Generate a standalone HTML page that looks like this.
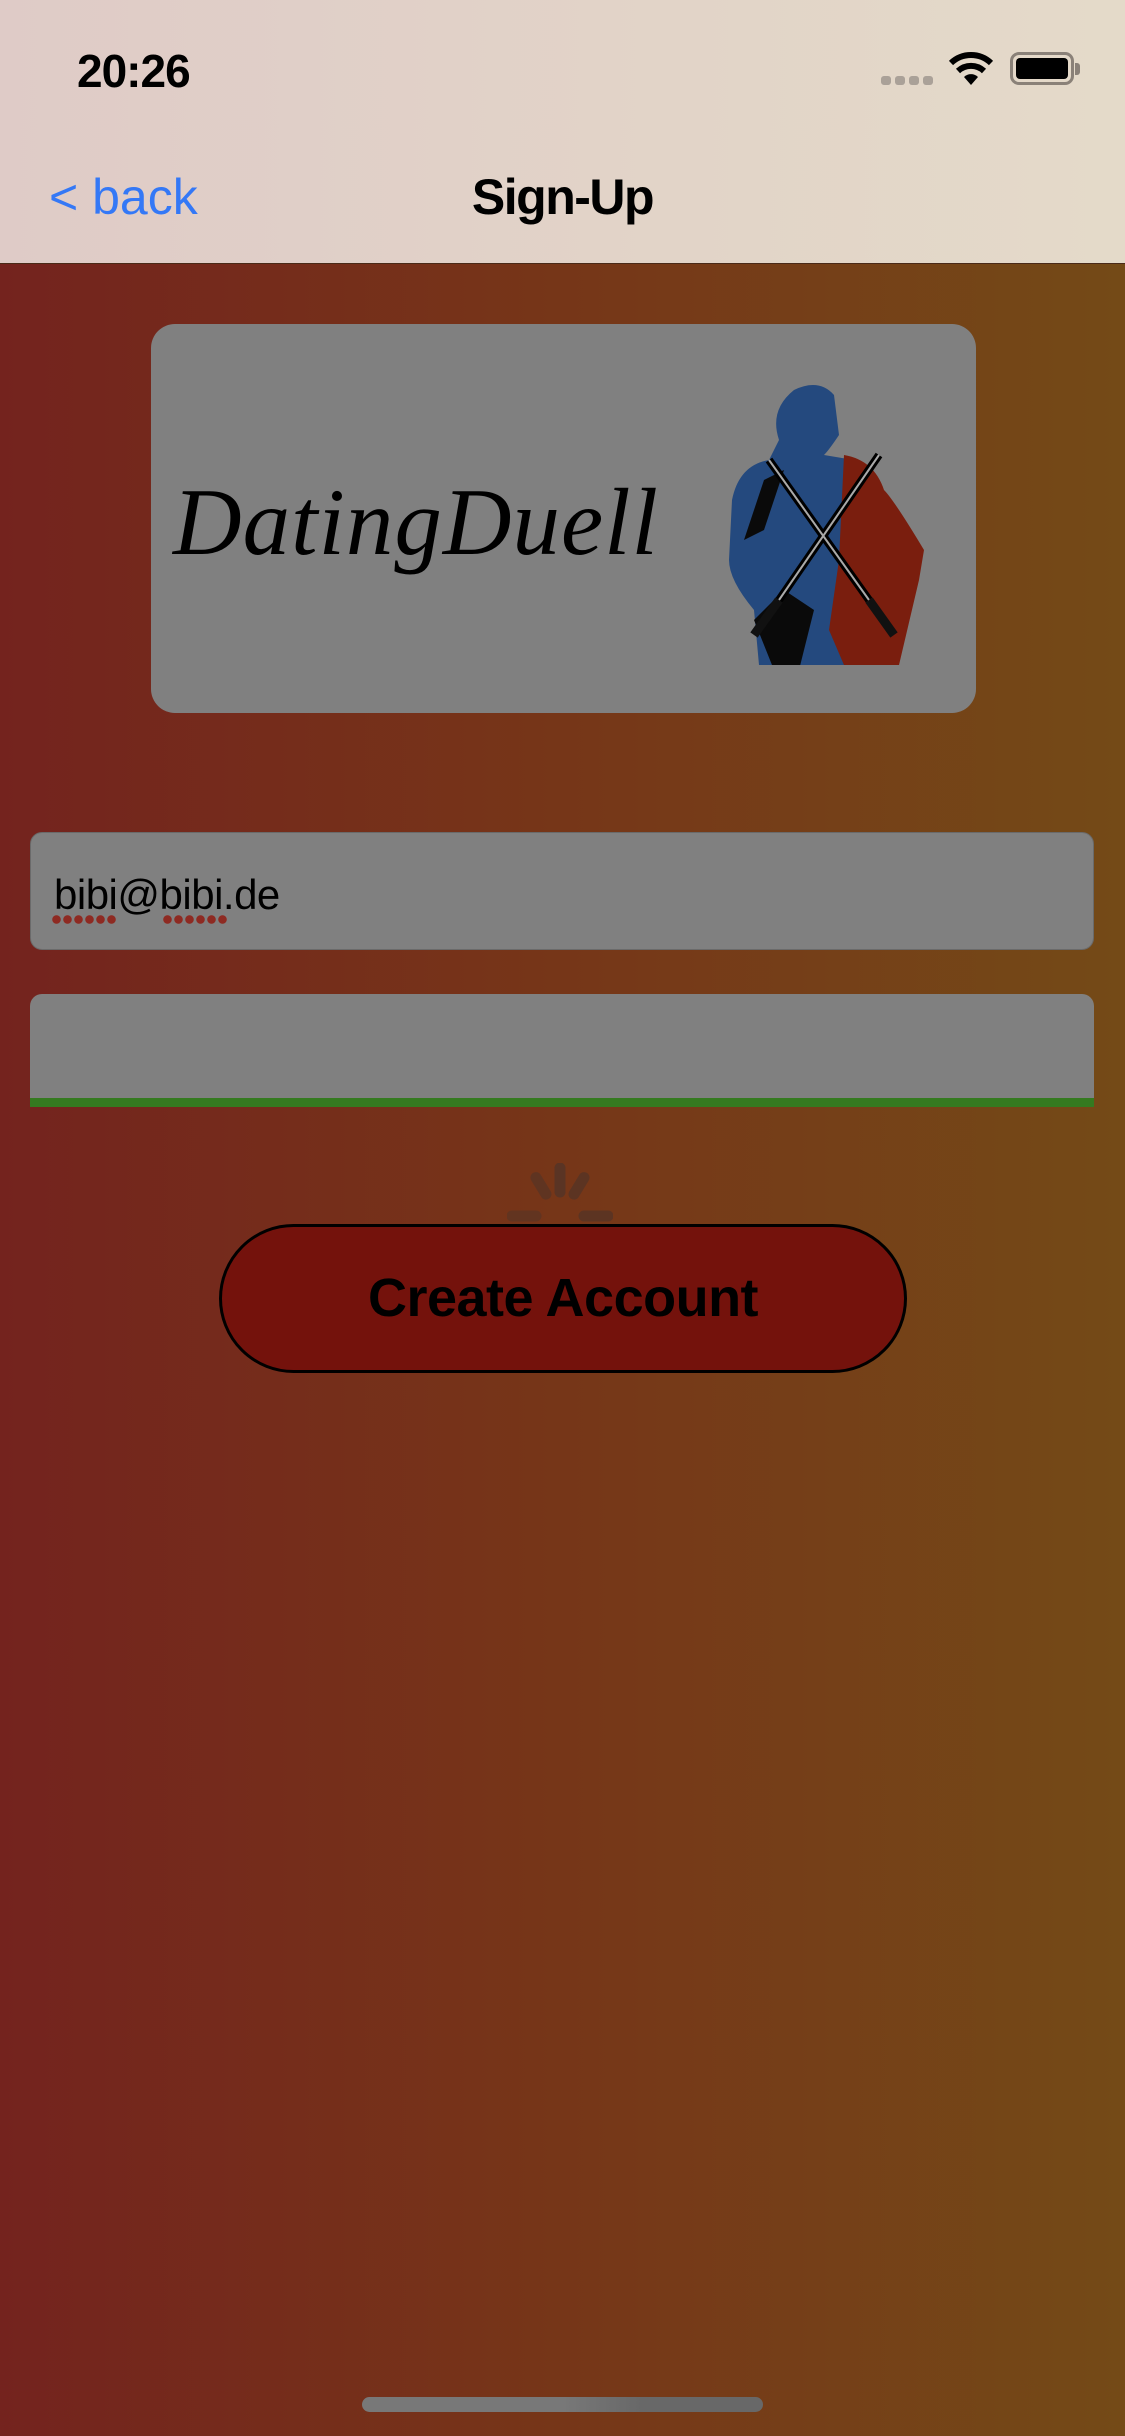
<!DOCTYPE html>
<html><head><meta charset="utf-8"><style>
*{margin:0;padding:0;box-sizing:border-box}
body{width:1125px;height:2436px;position:relative;overflow:hidden;font-family:"Liberation Sans",sans-serif;background:linear-gradient(90deg,#74231e 0%,#763618 50%,#744a17 100%)}
.nav{position:absolute;left:0;top:0;width:1125px;height:264px;background:linear-gradient(90deg,#dfcbc7,#e4dac9);border-bottom:1px solid #4a2a18}
.abs{position:absolute}
.dots{position:absolute;height:9px;background:radial-gradient(circle,#8e2a22 4px,transparent 4.5px) 0 0/11px 9px}
</style></head><body>
<div class="nav">
<div class="abs" style="left:77px;top:44px;font-size:46px;font-weight:bold;letter-spacing:-1px">20:26</div>
<div class="abs" style="left:881px;top:76px;width:52px;height:9px">
 <span class="abs" style="left:0;width:10px;height:9px;border-radius:3px;background:#aaa198"></span>
 <span class="abs" style="left:14px;width:10px;height:9px;border-radius:3px;background:#aaa198"></span>
 <span class="abs" style="left:28px;width:10px;height:9px;border-radius:3px;background:#aaa198"></span>
 <span class="abs" style="left:42px;width:10px;height:9px;border-radius:3px;background:#aaa198"></span>
</div>
<svg class="abs" style="left:948px;top:50px" width="46" height="36" viewBox="0 0 46 36"><path d="M23 35 L16 27 A10 10 0 0 1 30 27 Z" fill="#000"/><path d="M10 21 A19 19 0 0 1 36 21" stroke="#000" stroke-width="6" fill="none"/><path d="M3 13 A29 29 0 0 1 43 13" stroke="#000" stroke-width="6" fill="none"/></svg>
<div class="abs" style="left:1010px;top:52px;width:64px;height:33px;border:3px solid #8a8178;border-radius:9px;padding:3px"><div style="width:100%;height:100%;background:#000;border-radius:4px"></div></div>
<div class="abs" style="left:1075px;top:63px;width:5px;height:12px;background:#8a8178;border-radius:0 3px 3px 0"></div>
<div class="abs" style="left:49px;top:168px;font-size:50px;color:#3478f6">&lt; back</div>
<div class="abs" style="left:0;width:1125px;text-align:center;top:168px;font-size:50px;font-weight:bold;letter-spacing:-1.5px">Sign-Up</div>
</div>

<div class="abs" style="left:151px;top:324px;width:825px;height:389px;background:#808080;border-radius:24px">
 <div class="abs" style="left:22px;top:143px;font-family:'Liberation Serif',serif;font-style:italic;font-size:95px;color:#000;letter-spacing:1px">DatingDuell</div>
 <svg class="abs" style="left:573px;top:56px" width="205" height="285" viewBox="0 0 205 285">
  <path d="M70 10 Q95 -2 110 15 L115 55 Q105 70 100 75 L130 80 L140 120 L120 285 L35 285 L30 230 Q5 200 5 180 L8 120 Q15 85 45 80 L55 60 Q45 30 70 10Z" fill="#24497e"/>
  <path d="M120 75 Q150 80 160 110 Q170 120 200 170 L195 200 L175 285 L120 285 L105 250 L115 180 Z" fill="#7a1e0e"/>
  <path d="M50 290 L30 240 L60 210 L90 230 L75 290Z M60 90 L40 100 L20 160 L40 150Z" fill="#0a0a0a"/>
  <g stroke="#000" stroke-width="8" fill="none"><path d="M45 80 L145 220"/><path d="M155 75 L55 220"/></g>
  <g stroke="#aaa" stroke-width="2" fill="none"><path d="M45 80 L145 220"/><path d="M155 75 L55 220"/></g>
  <g stroke="#111" stroke-width="9"><path d="M145 220 L170 255"/><path d="M55 220 L30 255"/></g>
 </svg>
</div>

<div class="abs" style="left:30px;top:832px;width:1064px;height:118px;background:#808080;border-radius:12px;border:1px solid #6a6a6a">
 <div class="abs" style="left:23px;top:38px;font-size:42px;color:#000;letter-spacing:-0.5px">bibi@bibi.de</div>
 <div class="dots" style="left:20px;top:82px;width:66px"></div>
 <div class="dots" style="left:131px;top:82px;width:66px"></div>
</div>
<div class="abs" style="left:30px;top:994px;width:1064px;height:113px;background:#808080;border-radius:12px 12px 0 0;border-bottom:9px solid #357a20"></div>

<svg class="abs" style="left:507px;top:1163px" width="106" height="106" viewBox="-53 -53 106 106">
 <g stroke="#5a3424" stroke-width="11" stroke-linecap="round">
  <line x1="0" y1="-48" x2="0" y2="-24"/>
  <line x1="17" y1="-42" x2="10" y2="-24" opacity=".9" transform="rotate(10)"/>
  <line x1="-17" y1="-42" x2="-10" y2="-24" opacity=".8" transform="rotate(-10)"/>
  <line x1="24" y1="0" x2="48" y2="0" opacity=".9"/>
  <line x1="-24" y1="0" x2="-48" y2="0" opacity=".7"/>
 </g>
</svg>

<div class="abs" style="left:219px;top:1224px;width:688px;height:149px;background:#74120c;border:3px solid #000;border-radius:75px;text-align:center;line-height:143px;font-size:54px;font-weight:bold;color:#000;letter-spacing:-0.5px">Create Account</div>

<div class="abs" style="left:362px;top:2397px;width:401px;height:15px;border-radius:8px;background:linear-gradient(90deg,#787878 50%,#686868 70%)"></div>
</body></html>
